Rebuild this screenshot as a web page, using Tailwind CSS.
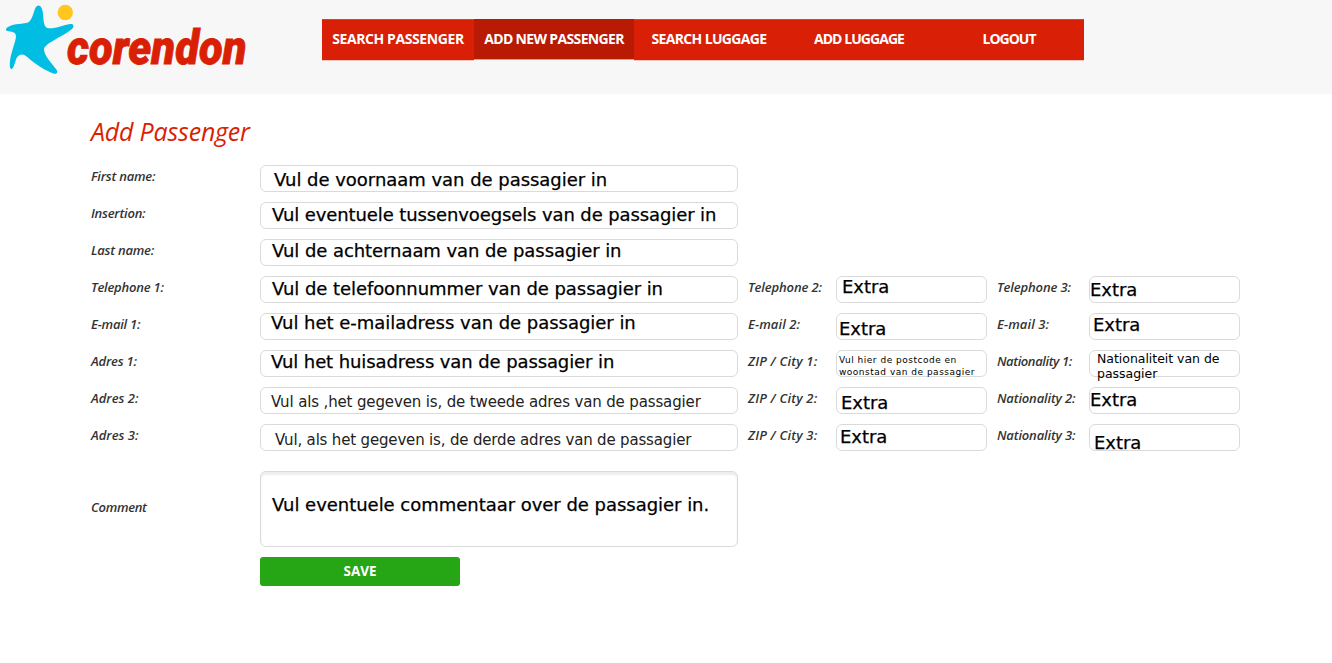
<!DOCTYPE html>
<html lang="en">
<head>
<meta charset="utf-8">
<title>Corendon - Add Passenger</title>
<script src="https://cdn.jsdelivr.net/npm/@tailwindcss/browser@4"></script>
</head>
<body class="h-[663px] overflow-hidden bg-white font-['Open_Sans',sans-serif] text-[#333]">
<header class="flex h-[94px] items-start bg-[#f7f7f7]">
  <svg class="h-[94px] w-[322px] shrink-0" viewBox="0 0 322 94" role="img" aria-label="Corendon">
    <path fill="#00bde4" d="M38.500 5.500 C41 5.500 42.500 9 43 14 C43.700 22 44 27 47.500 28 C54 29.500 63 25 70 24 C74 23.500 74.500 26.500 72 29 C64 36 45 43 44 49 C44 56 51 62 56 69 C59 73 56 75 52 73 C42 69 33 62 26 56 C21 53 17 55 15.500 61 C14 66 13 69 11.500 69 C9.500 69 9.700 64 10 61 C11 52 16 41 16 36 C16 32 11 31.500 7.500 31 C5 30.500 5.500 28 9 26.500 C14 23.500 24 24 28 22.500 C33 20 34 9 36 7 Q37 5.500 38.500 5.500Z"/>
    <circle cx="65.300" cy="12.500" r="7.700" fill="#ffc61e"/>
    <text x="67" y="63.700" textLength="179.500" lengthAdjust="spacingAndGlyphs" fill="#d91f05" stroke="#d91f05" stroke-width="0.800" font-family="Roboto, sans-serif" font-size="48" font-weight="900" font-style="italic">corendon</text>
  </svg>
  <nav class="mt-[19px] flex h-[42px] w-[762px] text-[14px] leading-[37px] font-bold text-white text-center whitespace-nowrap [&>a]:h-[42px] [&>a]:border-t [&>a]:border-b [&>a]:border-t-[#df402b] [&>a]:border-b-[#f3c4bd] [&>a]:bg-[#d91f05]">
    <a class="w-[152px] tracking-[-0.4px]">SEARCH PASSENGER</a>
    <a class="h-[41px]! w-[160px] border-t-[#b81a04]! border-b-[#dd9a90]! bg-[#b81a04]! tracking-[-0.65px]">ADD NEW PASSENGER</a>
    <a class="w-[150px] tracking-[-0.65px]">SEARCH LUGGAGE</a>
    <a class="w-[150px] tracking-[-0.95px]">ADD LUGGAGE</a>
    <a class="w-[150px] tracking-[-1px]">LOGOUT</a>
  </nav>
</header>
<main class="pl-[91px]">
  <h1 class="h-[71px] pt-[20px] text-[25px] leading-[34px] tracking-[-0.2px] text-[#d91f05] italic">Add Passenger</h1>
  <form class="grid grid-cols-[169px_478px_98px_151px_102px_151px] gap-y-[10px] text-[13px] leading-[22px] font-semibold tracking-[-0.22px] italic whitespace-nowrap [&_.field]:h-[27px] [&_.field]:rounded-[6px] [&_.field]:border [&_.field]:border-[#dadada] [&_.field]:font-['DejaVu_Sans',sans-serif] [&_.field]:text-[18px] [&_.field]:leading-[18px] [&_.field]:font-normal [&_.field]:tracking-[-0.03px] [&_.field]:text-black [&_.field]:not-italic [&_.field]:[-webkit-text-stroke:0.25px_black]">
    <label>First name:</label><div class="field pt-[5px] pl-[13px]">Vul de voornaam van de passagier in</div><div class="col-span-4"></div>
    <label>Insertion:</label><div class="field pt-[3px] pl-[11px]"><span class="tracking-[-0.11px]">Vul eventuele tussenvoegsels van de passagier in</span></div><div class="col-span-4"></div>
    <label>Last name:</label><div class="field pt-[2px] pl-[11px]"><span class="tracking-[-0.07px]">Vul de achternaam van de passagier in</span></div><div class="col-span-4"></div>

    <label>Telephone 1:</label><div class="field pt-[3px] pl-[11px]"><span class="tracking-[-0.07px]">Vul de telefoonnummer van de passagier in</span></div>
    <label class="pl-[10px] tracking-[-0.12px]">Telephone 2:</label><div class="field pt-[1px] pl-[5px]">Extra</div>
    <label class="pl-[10px] tracking-[-0.12px]">Telephone 3:</label><div class="field pt-[4px]">Extra</div>

    <label>E-mail 1:</label><div class="field pl-[10px]">Vul het e-mailadress van de passagier in</div>
    <label class="pl-[10px] tracking-[0.1px]">E-mail 2:</label><div class="field pt-[6px] pl-[2px]">Extra</div>
    <label class="pl-[10px] tracking-[0.1px]">E-mail 3:</label><div class="field pt-[2px] pl-[3px]">Extra</div>

    <label>Adres 1:</label><div class="field pt-[2px] pl-[10px]"><span class="tracking-[-0.1px]">Vul het huisadress van de passagier in</span></div>
    <label class="pl-[10px] tracking-[0.2px]">ZIP / City 1:</label><div class="field pt-[4px] pl-[2px]"><p class="text-[9px] leading-[11.500px] tracking-[0.5px] [-webkit-text-stroke:0]">Vul hier de postcode en<br>woonstad van de passagier</p></div>
    <label class="pl-[10px] tracking-[-0.4px]">Nationality 1:</label><div class="field pl-[7px]"><p class="text-[12.500px] leading-[15px] [-webkit-text-stroke:0]">Nationaliteit van de<br>passagier</p></div>

    <label class="tracking-normal">Adres 2:</label><div class="field pt-[5px] pl-[10px]"><p class="text-[15px] tracking-[-0.14px] text-[#222] [-webkit-text-stroke:0]">Vul als ,het gegeven is, de tweede adres van de passagier</p></div>
    <label class="pl-[10px] tracking-[0.2px]">ZIP / City 2:</label><div class="field pt-[6px] pl-[4px]">Extra</div>
    <label class="pl-[10px] tracking-[-0.15px]">Nationality 2:</label><div class="field pt-[3px]">Extra</div>

    <label class="tracking-normal">Adres 3:</label><div class="field pt-[6px] pl-[14px]"><p class="text-[15px] tracking-[-0.17px] text-[#222] [-webkit-text-stroke:0]">Vul, als het gegeven is, de derde adres van de passagier</p></div>
    <label class="pl-[10px] tracking-[0.2px]">ZIP / City 3:</label><div class="field pt-[3px] pl-[3px]">Extra</div>
    <label class="pl-[10px] tracking-[-0.15px]">Nationality 3:</label><div class="field pt-[9px] pl-[4px]">Extra</div>
  </form>
  <div class="mt-5 flex">
    <label class="w-[169px] pt-[25px] text-[13px] leading-[22px] font-semibold tracking-[-0.3px] italic">Comment</label>
    <div class="h-[76px] w-[478px] rounded-[6px] border border-[#dadada] pt-[24px] pl-[11px] font-['DejaVu_Sans',sans-serif] text-[18px] leading-[18px] tracking-[-0.03px] whitespace-nowrap text-black shadow-[inset_0_3px_2px_#eeeeee] [-webkit-text-stroke:0.25px_black]">Vul eventuele commentaar over de passagier in.</div>
  </div>
  <button class="mt-[10px] ml-[169px] block h-[29px] w-[200px] rounded-[3px] bg-[#26a515] text-[13.500px] leading-[29px] font-bold text-white">SAVE</button>
</main>
</body>
</html>
